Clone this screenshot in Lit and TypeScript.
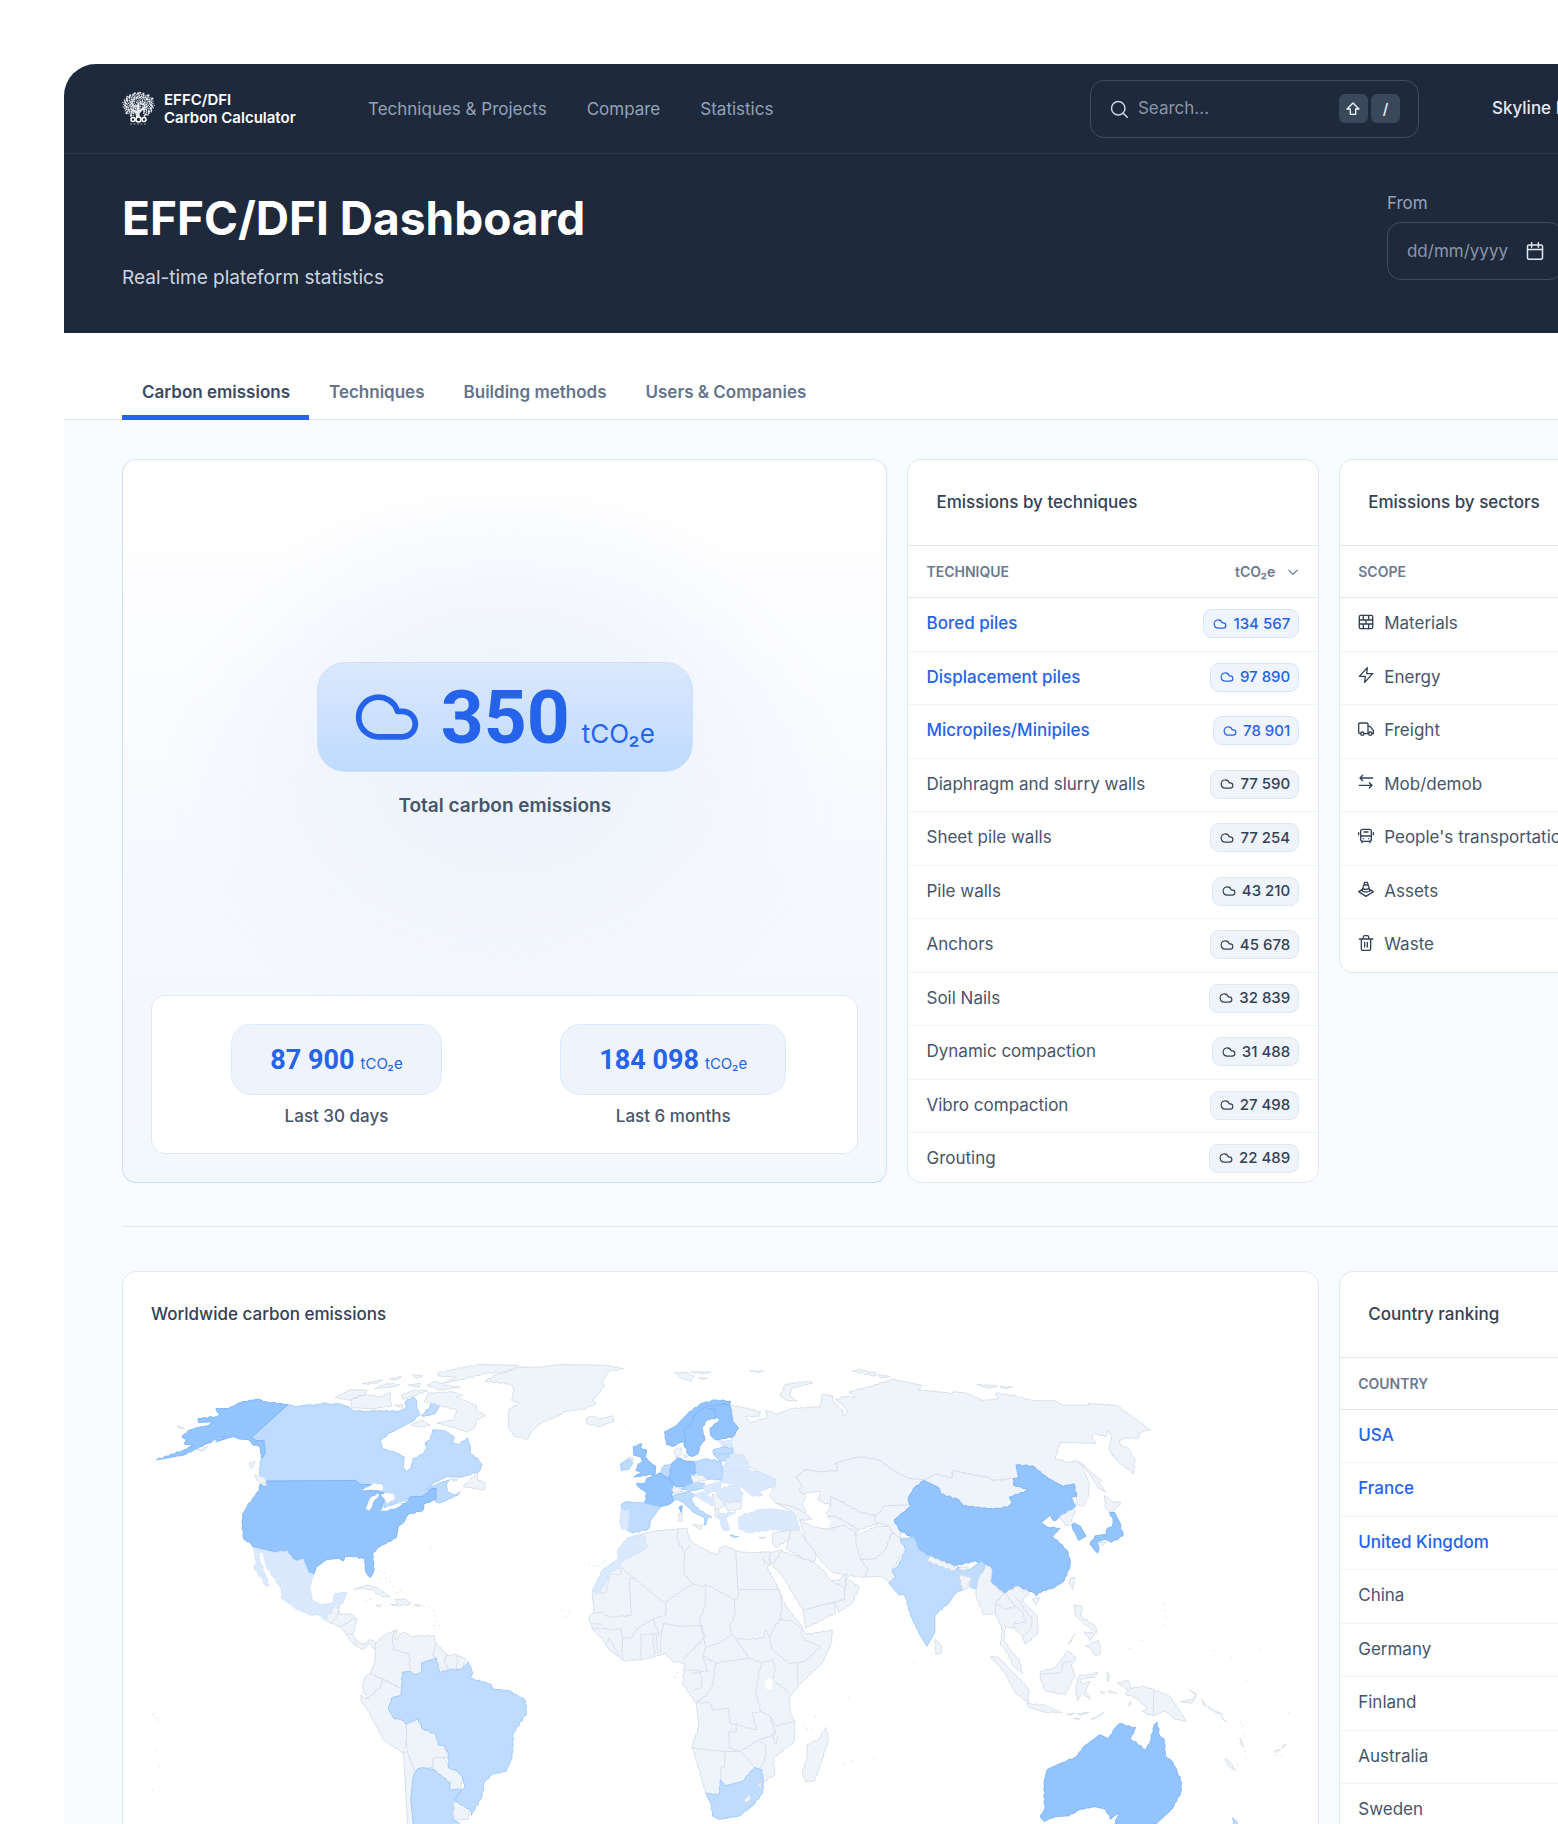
import { LitElement, html, css, svg } from "lit";
import { customElement } from "lit/decorators.js";
import { classMap } from "lit/directives/class-map.js";

type Tone = "land" | "low" | "mid" | "high" | "water";
type Shape = [Tone, string];

/* ---------- map data: outlines as "x,y" lists, grouped by region ---------- */

const americas: Shape[] = [
  ["mid", "444,194 466,200 500,196 540,194 556,188 575,194 600,192 625,200 640,212 680,214 720,212 780,214 800,206 796,186 820,170 832,182 832,206 840,226 815,246 785,262 745,282 722,304 728,328 760,334 795,352 790,380 800,396 815,384 820,356 850,344 862,325 856,310 872,300 880,270 912,272 930,282 944,292 938,310 958,314 984,294 992,320 990,340 1015,356 1028,374 1022,392 990,406 960,412 920,410 880,432 860,450 900,430 930,420 920,436 922,456 948,466 962,456 955,466 900,490 888,486 890,446 878,446 860,470 812,472 795,488 760,494 735,506 732,490 740,460 720,458 690,446 648,422 382,424 358,404 364,350 378,340 374,300 350,302 334,294"],
  ["mid", "845,226 870,205 874,188 900,198 886,222 850,230"],
  ["high", "50,360 128,332 160,316 132,312 140,300 126,292 145,272 178,262 205,258 220,246 176,248 174,236 230,230 240,224 228,206 265,206 300,188 350,178 382,186 444,194 334,294 350,302 372,302 376,340 366,356 360,320 340,316 326,300 300,298 280,290 228,306 256,286 205,310 130,346"],
  ["high", "382,424 648,422 664,434 692,434 664,450 712,454 734,460 700,468 680,506 690,510 704,480 722,464 736,480 722,512 770,506 800,488 812,472 850,470 878,446 890,446 888,480 852,494 850,512 806,524 790,550 776,560 770,594 722,620 698,640 704,690 692,714 678,694 676,658 640,650 615,652 612,664 596,656 560,660 528,684 522,704 506,700 490,658 470,664 458,658 442,632 400,638 340,622 330,608 312,598 306,545 308,526 322,500 345,470 358,452 362,432 376,442"],
  ["water", "664,450 684,444 704,429 730,438 730,452 706,449"],
  ["water", "678,508 690,478 712,462 720,464 700,488 690,512"],
  ["water", "734,460 762,462 766,474 745,492 736,482"],
  ["water", "720,513 745,500 774,502 745,512"],
  ["water", "768,493 798,484 797,490"],
  ["low", "340,624 400,638 442,634 458,658 470,664 490,658 506,700 522,704 510,744 518,780 545,796 578,790 586,762 622,757 610,790 600,796 575,806 576,820 560,842 530,824 510,826 470,808 424,774 424,748 400,712 380,680 370,640 358,636 360,660 375,700 388,738 380,740 362,712 342,682 350,668"],
  ["land", "558,842 562,824 576,820 574,806 592,804 600,798 598,824 634,824 652,838 640,884 650,900 670,914 690,900 708,910 706,930 688,912 672,930 650,918 630,900 618,882 604,862 575,852"],
  ["land", "708,910 735,886 772,870 758,892 762,930 810,944 812,996 788,998 786,1048 735,1020 690,1002 706,970"],
  ["land", "772,870 768,900 790,878 812,890 884,888 890,912 880,944 888,960 846,970 846,996 824,1006 810,990 810,944 762,930 758,892"],
  ["land", "890,912 922,944 914,960 926,992 900,1000 890,956 880,944"],
  ["land", "922,946 954,946 958,990 930,990 914,970"],
  ["land", "954,946 980,960 966,990 952,988"],
  ["land", "690,1002 728,1020 724,1040 686,1078 670,1060 668,1040 676,1012"],
  ["land", "728,1020 786,1048 784,1066 756,1076 746,1110 784,1140 800,1154 802,1200 792,1242 735,1204 710,1160 680,1104 666,1090 664,1066 686,1078 724,1040"],
  ["land", "800,1154 836,1138 846,1166 890,1186 896,1216 914,1218 926,1256 882,1256 880,1284 824,1294 802,1234"],
  ["land", "882,1256 914,1252 928,1286 950,1292 968,1312 966,1346 930,1352 932,1330 880,1290"],
  ["land", "792,1242 802,1234 824,1294 820,1330 814,1380 826,1500 806,1500 800,1380"],
  ["mid", "834,1288 860,1286 880,1290 932,1330 930,1352 966,1350 944,1384 942,1440 960,1452 930,1500 826,1500 814,1380 820,1312"],
  ["land", "944,1386 990,1410 986,1440 960,1442 942,1430"],
  ["mid", "788,998 812,996 824,1006 846,996 846,970 890,956 900,1000 930,990 966,990 986,966 1000,1000 992,1016 1055,1034 1060,1048 1110,1054 1158,1082 1162,1120 1122,1180 1118,1256 1100,1296 1060,1304 1034,1330 1028,1370 996,1428 990,1410 944,1384 976,1340 968,1312 950,1292 928,1286 926,1240 914,1218 896,1216 890,1186 846,1166 836,1138 800,1154 784,1140 764,1138 746,1110 756,1076 786,1066"],
  ["land", "642,750 680,736 712,744 752,772 725,770 695,750 665,746"],
  ["land", "766,778 800,780 814,792 780,800 752,794 775,794"],
  ["land", "708,796 726,796 720,802"],
  ["land", "824,796 842,796 840,801"],
  ["land", "586,174 628,150 680,150 680,160 632,180"],
  ["land", "632,180 680,164 720,170 752,158 750,180 756,198 700,206 636,204"],
  ["land", "666,132 730,120 704,132"],
  ["land", "704,146 740,130 780,134 770,140 720,144"],
  ["land", "750,116 786,110 764,120"],
  ["land", "820,104 850,108 830,116"],
  ["land", "804,136 842,130 840,142"],
  ["land", "785,166 820,152 866,152 820,168 790,178"],
  ["land", "764,196 790,194 786,206"],
  ["land", "855,186 866,160 940,156 970,166 950,172 1010,196 1010,210 1038,228 1010,240 1004,264 980,276 940,262 892,250 942,240 952,210 905,198 870,188"],
  ["land", "895,100 940,88 1020,74 1140,76 1100,96 1040,100 980,116 910,130 950,112 895,108"],
  ["land", "862,136 890,124 918,136 962,142 900,150"],
  ["land", "815,256 845,240 872,256 835,262"],
  ["land", "1140,82 1200,82 1260,74 1400,76 1454,86 1410,94 1390,120 1395,140 1360,180 1370,190 1340,206 1280,214 1258,228 1210,246 1180,270 1164,298 1124,288 1106,262 1108,208 1140,190 1116,182 1124,150 1110,132 1036,124 1070,104 1100,96"],
  ["land", "972,440 1016,398 1014,420 1038,430 1034,450 1000,446"],
  ["land", "934,416 956,420 940,424"],
  ["land", "344,406 372,412 382,438 352,422"],
  ["land", "328,370 346,364 334,386"],
  ["land", "174,330 204,322 190,334"],
  ["land", "112,258 134,264 116,264"],
];

const europeAfrica: Shape[] = [
  ["land", "80,236 100,230 120,238 160,228 164,244 120,260 84,252"],
  ["land", "346,98 385,98 405,108 394,124 370,116"],
  ["land", "395,96 456,96 430,102"],
  ["land", "418,114 446,114 432,119"],
  ["land", "572,93 614,93 594,97"],
  ["land", "664,170 680,132 756,124 760,130 700,144 692,168 714,184 680,180"],
  ["land", "880,94 900,88 952,100 950,108"],
  ["land", "958,104 994,110 964,114"],
  ["land", "516,196 560,204 604,216 600,230 560,230 575,250 600,238 624,234 618,210 640,216 650,224 700,206 784,200 790,164 820,166 826,190 850,210 854,230 866,216 850,190 830,180 850,170 890,172 870,156 904,148 940,138 1000,118 1090,136 1080,150 1180,160 1182,156 1220,158 1274,182 1320,176 1310,160 1360,166 1420,182 1486,182 1516,196 1590,196 1590,190 1660,196 1680,200 1742,246 1776,270 1750,276 1734,298 1720,292 1682,300 1688,318 1710,326 1728,356 1726,402 1680,366 1650,330 1660,290 1650,270 1642,292 1612,280 1600,288 1612,310 1504,308 1490,356 1530,368 1550,362 1570,378 1592,430 1590,470 1572,500 1550,496 1554,470 1546,432 1514,440 1466,414 1420,380 1372,376 1380,414 1364,416 1310,422 1280,412 1180,392 1180,414 1130,404 1096,420 1050,416 1000,390 960,360 900,350 830,370 836,392 776,396 740,390 712,410 730,440 720,450 740,470 730,490 740,520 700,500 650,490 630,466 650,438 650,418 600,396 572,382 556,348 520,342 516,302 522,292 538,266 522,246 514,200"],
  ["high", "316,276 350,258 390,216 430,190 470,180 514,184 512,200 500,192 450,200 410,220 396,250 376,272 380,310 368,306 340,320 322,314"],
  ["high", "380,310 376,272 396,250 410,220 440,202 468,210 470,236 446,240 428,262 438,300 422,320 416,342 400,350 388,346 374,312"],
  ["high", "440,200 500,192 514,200 522,246 538,266 520,292 468,300 454,286 452,266 482,240 470,230 468,208"],
  ["land", "346,330 366,324 368,342 350,354"],
  ["land", "372,344 386,350 376,354"],
  ["high", "222,320 248,312 244,324 262,330 258,350 276,370 290,380 288,402 224,412 246,396 230,392 236,374 250,366 244,350 224,346"],
  ["mid", "184,372 214,352 220,370 210,388 186,392"],
  ["land", "206,354 220,352 222,364"],
  ["mid", "300,400 316,376 338,372 332,390 332,414"],
  ["high", "232,430 258,430 262,416 300,400 344,424 338,466 344,484 330,494 300,502 256,496 262,460 234,438"],
  ["high", "338,370 356,354 384,364 406,366 410,400 392,412 402,436 396,444 350,440 332,420 332,390"],
  ["mid", "186,494 200,486 256,490 304,502 276,540 268,568 220,580 200,570 206,512 188,508"],
  ["low", "186,508 210,512 206,570 186,568 182,540"],
  ["mid", "344,466 392,454 410,466 396,474 406,500 458,534 446,530 440,556 434,556 436,534 400,516 376,490 356,480 342,480"],
  ["land", "400,556 428,556 426,570"],
  ["land", "358,522 370,520 370,544 358,544"],
  ["high", "360,502 369,498 366,518"],
  ["land", "338,448 360,442 372,456 344,460"],
  ["mid", "366,448 402,428 436,430 434,446 400,452"],
  ["mid", "406,366 436,358 486,364 496,404 486,422 440,416 412,400"],
  ["land", "396,406 430,408 444,420 404,430"],
  ["low", "430,440 490,424 480,450 440,462"],
  ["low", "478,304 516,302 518,320 490,320"],
  ["mid", "462,330 490,322 520,324 522,342 462,342"],
  ["mid", "464,344 512,344 500,364 480,362"],
  ["low", "500,360 520,342 556,348 572,382 560,392 494,392"],
  ["low", "494,396 560,390 600,396 650,418 650,438 600,456 612,466 580,470 556,448 530,434 490,428"],
  ["low", "470,452 530,432 552,460 546,484 500,488 480,474"],
  ["low", "404,466 430,456 460,476 462,500 430,480"],
  ["land", "460,462 480,470 496,500 470,510"],
  ["land", "496,490 546,486 544,508 505,514"],
  ["land", "466,506 480,510 480,534 468,530"],
  ["low", "478,524 530,516 500,534 512,570 490,570"],
  ["mid", "512,587 540,590 526,593"],
  ["low", "540,530 600,510 640,508 706,516 722,566 690,572 640,570 570,578 540,568 538,540"],
  ["land", "600,592 622,592 610,598"],
  ["land", "650,490 700,500 740,520 760,540 722,540 700,516"],
  ["land", "712,410 740,390 776,396 836,392 830,370 900,350 960,360 1000,390 1050,416 1096,420 1064,446 1046,476 1056,496 980,498 950,530 900,516 870,498 818,470 816,496 780,484 782,454 730,462 720,450 730,440"],
  ["land", "816,470 870,498 900,516 950,530 960,550 900,570 830,530 800,530 810,510 816,496"],
  ["land", "800,530 830,530 900,570 890,588 850,560 800,568"],
  ["land", "980,498 1056,496 1046,520 1006,540 1026,570 1026,596 1000,580 990,560 950,548 950,530"],
  ["land", "722,540 760,560 810,570 850,556 890,576 892,610 906,660 928,690 918,712 860,708 820,698 780,656 740,600"],
  ["land", "890,590 950,560 990,560 1000,580 980,630 950,658 906,660 892,620"],
  ["land", "906,660 950,658 980,630 1000,580 1026,596 1040,630 1000,690 1010,712 992,728 968,710 918,712 928,690"],
  ["land", "694,574 720,568 740,600 770,640 768,664 740,660 680,626 690,600"],
  ["land", "640,580 694,572 690,600 650,624 640,610"],
  ["land", "632,640 668,630 664,650 634,676"],
  ["land", "640,676 668,634 740,660 766,668 800,700 812,720 858,744 856,780 790,796 732,812 700,760 680,720"],
  ["land", "732,812 790,796 826,790 830,820 740,866"],
  ["land", "858,744 864,716 902,744 880,790 840,818 826,788 856,780"],
  ["land", "812,722 840,722 862,700 858,744"],
  ["water", "740,466 784,458 770,480 792,510 812,540 808,566 776,562 764,540 770,520 744,490"],
  ["land", "224,588 240,584 300,572 384,566 390,600 420,622 474,646 482,624 500,618 530,634 570,640 632,636 630,680 610,656 660,750 680,800 730,860 740,884 820,872 818,910 790,970 722,1034 690,1076 694,1120 708,1146 706,1206 642,1258 648,1306 614,1326 610,1362 580,1400 540,1430 480,1440 460,1430 458,1400 440,1362 420,1290 398,1220 420,1160 410,1090 370,1030 376,970 340,966 320,942 250,960 196,964 150,930 130,900 98,866 90,836 104,812 98,758 130,690 180,656 176,630 205,594"],
  ["low", "205,594 256,588 264,624 230,644 188,664 182,686 152,696 140,728 122,756 98,756 130,690 174,660 176,632"],
  ["mid", "440,1362 480,1366 484,1320 496,1340 550,1326 586,1284 608,1290 614,1326 610,1362 580,1400 540,1430 480,1440 460,1430 458,1400"],
  ["land", "554,1382 570,1366 576,1378 562,1390"],
  ["land", "596,1334 606,1330 606,1346"],
  ["water", "620,1022 640,1018 638,1048 618,1046"],
  ["land", "800,1164 810,1200 790,1260 768,1324 740,1328 730,1300 744,1256 744,1216 780,1200"],
  ["land", "1130,898 1150,920 1148,940 1130,944"],
];

const asiaPacific: Shape[] = [
  ["land", "76,422 110,404 160,414 160,392 260,412 290,422 344,416 344,436 392,450 332,472 340,488 326,502 284,508 194,498 180,480 124,462 120,444"],
  ["high", "76,422 120,444 124,462 180,480 194,498 284,508 326,502 340,488 332,472 392,450 344,436 344,416 360,414 352,376 402,378 446,414 494,440 526,432 534,470 518,472 530,500 466,544 456,526 428,548 446,562 484,566 462,590 504,630 514,656 514,680 496,724 470,742 418,760 414,770 400,756 356,740 320,760 300,750 276,726 280,684 262,676 230,664 170,678 92,650 58,626 50,600 0,570 -14,540 10,520 36,500 28,476 44,446"],
  ["mid", "4,598 46,592 60,628 92,650 86,666 170,694 178,680 182,692 212,690 248,664 262,676 256,690 240,716 232,748 212,740 216,712 182,706 190,752 170,762 150,790 108,826 108,880 84,920 66,890 36,830 18,764 0,766 -30,730 -10,712 -20,690 0,676 20,630"],
  ["land", "92,650 170,680 168,694 86,666"],
  ["land", "182,706 216,712 212,740 190,752"],
  ["land", "182,682 208,682 206,690 184,690"],
  ["land", "262,676 280,690 276,726 300,750 316,762 290,790 292,820 256,826 232,770 232,748 240,716 256,690"],
  ["land", "316,762 356,740 390,758 372,784 416,830 418,880 380,914 372,890 346,866 320,860 316,900 340,940 362,960 372,1002 345,980 320,930 306,918 310,870 290,820 290,790"],
  ["land", "276,952 300,954 340,996 390,1048 388,1090 350,1060 316,996"],
  ["land", "384,1092 440,1098 490,1120 440,1118 390,1104"],
  ["land", "426,996 470,984 508,934 532,954 518,980 530,1006 500,1066 440,1054 426,1020"],
  ["land", "536,1084 532,1050 540,1010 598,1000 590,1012 545,1020 550,1034 576,1026 560,1050 574,1080 552,1060"],
  ["land", "528,796 550,798 548,830 590,860 594,880 560,856 530,826"],
  ["land", "560,920 600,902 608,940 590,948 580,930"],
  ["land", "556,876 590,882 575,904"],
  ["land", "508,914 530,882 518,906"],
  ["land", "656,1030 690,1024 696,1048 730,1040 766,1050 812,1070 834,1100 864,1144 830,1140 800,1114 764,1130 730,1116 746,1106 714,1076 680,1064 690,1050"],
  ["land", "846,1086 880,1080 892,1066 874,1050 896,1066 880,1092"],
  ["land", "624,996 634,1010 628,1026"],
  ["land", "505,1124 528,1120 518,1128"],
  ["land", "536,1122 570,1120 545,1128"],
  ["land", "526,1136 544,1138 534,1142"],
  ["land", "576,1142 616,1120 590,1136"],
  ["land", "606,1056 620,1060 610,1063"],
  ["land", "628,1054 656,1060 632,1060"],
  ["land", "690,1100 696,1086 697,1096"],
  ["land", "516,716 528,712 524,750 514,736"],
  ["land", "402,778 424,774 412,796"],
  ["land", "484,530 526,506 530,520 518,540 524,556 500,558"],
  ["high", "520,556 528,550 546,560 562,590 540,602 530,580"],
  ["high", "634,518 648,518 662,545 674,588 640,608 624,600 596,604 602,626 598,640 588,632 574,614 590,588 624,584 626,566 642,560 644,544"],
  ["land", "618,468 640,484 668,490 640,516 622,506"],
  ["land", "600,608 624,606 610,618"],
  ["land", "540,362 570,390 610,424 600,428 624,458 600,446 572,400"],
  ["land", "234,134 296,138 270,146"],
  ["land", "304,140 342,142 324,146"],
  ["high", "664,1152 682,1160 712,1164 696,1198 742,1232 758,1200 764,1166 776,1148 784,1190 798,1200 800,1248 824,1270 836,1296 850,1330 846,1362 820,1410 775,1452 760,1500 650,1500 650,1452 660,1420 636,1440 622,1410 590,1402 545,1410 510,1430 470,1432 436,1446 424,1430 438,1410 436,1330 446,1290 490,1270 530,1254 560,1218 604,1186 630,1198 650,1166"],
  ["mid", "1002,1436 1018,1450 1010,1480"],
  ["land", "910,1080 926,1102 916,1096"],
  ["land", "930,1100 948,1114 934,1110"],
  ["land", "948,1116 972,1124 956,1122"],
  ["land", "968,1130 986,1148 972,1138"],
  ["land", "980,1258 996,1270 1012,1292 992,1280"],
  ["land", "1024,1196 1038,1224 1028,1216"],
  ["land", "1130,1234 1146,1230 1134,1240"],
  ["land", "1148,1222 1164,1214 1154,1226"],
];

const borders: Record<string, string[]> = {
  americas: [
    "600,798 592,828 575,852", "604,862 640,838 652,838", "620,882 640,884", "648,898 650,918",
  ],
  europeAfrica: [
    "188,686 310,786 320,786 400,732 374,700 376,640 354,600 356,570", "376,640 390,616",
    "400,732 430,742 440,734 526,780 538,774 530,634", "540,750 662,750",
    "104,760 140,760 152,704 184,704 184,686", "150,832 216,828 210,716 226,716",
    "320,786 320,826 280,838 230,870 216,896 190,896", "440,734 438,800 422,840 430,870",
    "304,940 306,880 314,852 360,860 424,858 440,890 400,930 370,960", "246,886 244,960",
    "280,884 286,946", "290,882 296,944", "186,870 190,900 188,962", "244,886 300,882 280,838",
    "100,852 128,854", "98,866 186,870", "136,916 150,896 164,920 180,950", "150,832 130,818 104,822",
    "526,780 528,826 512,860 520,884 480,910 440,924 424,858", "662,750 668,800 664,840 640,870 632,896 620,870 612,896 560,900 530,896 520,884",
    "530,896 570,956 610,970 640,960", "664,840 700,844 730,870 726,884",
    "632,896 640,930 690,972 740,966 784,920 736,900 726,884", "716,970 716,1036",
    "640,960 650,990 640,1020 690,1060", "430,950 470,970 570,956",
    "470,970 460,1040 440,1070 410,1090 450,1090 460,1112 508,1106 512,1150 580,1170 592,1170 580,1120 606,1116 590,1060 600,1000 610,970",
    "440,924 430,950 446,996 376,990", "400,1056 430,1040 424,996 396,1004",
    "606,1116 632,1130 650,1158 706,1146", "532,1150 532,1176 510,1176 510,1226 545,1236 600,1200 650,1186 632,1130",
    "398,1226 490,1236 545,1236", "498,1236 496,1282 486,1284 484,1320", "545,1236 586,1284",
    "600,1206 622,1220 618,1262 604,1286", "650,1170 640,1190 650,1216 656,1190",
  ],
  asiaPacific: [
    "320,762 350,800 376,822 380,850 346,850 346,866", "350,770 400,840 396,870 372,890",
    "290,790 320,810 350,800", "430,1004 486,1000 496,968 518,966", "766,1050 764,1130",
  ],
};

const islets = [
  [38, 1126], [48, 1136], [56, 1145], [46, 1234], [58, 1282], [38, 1352], [874, 626],
  [722, 694], [734, 700], [720, 716], [738, 714], [752, 726], [760, 740], [772, 760], [782, 752],
  [852, 798], [870, 804], [882, 812], [886, 828], [888, 846], [884, 858], [900, 858], [680, 784], [692, 780],
  [1268, 812], [1276, 832], [1290, 818], [1286, 834], [1350, 674], [1362, 680], [1376, 678], [1390, 672], [1396, 664],
  [1477, 276], [1606, 1014], [1614, 998], [1998, 1160], [2004, 1168], [2016, 1170], [2030, 1132], [2118, 1274], [2141, 1264], [2204, 1258], [2128, 1074], [2324, 968],
  [3074, 792], [3080, 812], [3082, 834], [3077, 856], [2975, 927], [3010, 902], [3228, 934], [3280, 953], [3366, 931], [3325, 1024], [3451, 1121],
  [3244, 1160], [3306, 1150], [3312, 1160], [3314, 1184], [3320, 1190], [3310, 1210], [3320, 1236], [3322, 1256], [3296, 1274], [3300, 1280], [3412, 1248], [3430, 1248],
];

const parse = (list: string) => list.split(" ").map((p) => p.split(",").map(Number) as [number, number]);

/* Adds small kinks to an edge. The result is the same from either end, so neighbours share one border. */
const coast = (a: [number, number], b: [number, number]): [number, number][] => {
  const flip = a[0] > b[0] || (a[0] === b[0] && a[1] > b[1]);
  const [p, q] = flip ? [b, a] : [a, b];
  const length = Math.hypot(q[0] - p[0], q[1] - p[1]);
  const steps = length > 110 ? 1 : Math.floor(length / 9);
  const out: [number, number][] = [];
  for (let i = 1; i < steps; i++) {
    const wave = Math.sin(p[0] * 12.9 + p[1] * 7.3 + q[0] * 3.7 + i * 47.1) * 2;
    out.push([
      Math.round(p[0] + ((q[0] - p[0]) * i) / steps - ((q[1] - p[1]) / length) * wave),
      Math.round(p[1] + ((q[1] - p[1]) * i) / steps + ((q[0] - p[0]) / length) * wave),
    ]);
  }
  return flip ? out.reverse() : out;
};

const outline = (list: string, closed = true) => {
  const pts = parse(list);
  const all: [number, number][] = [];
  pts.forEach((p, i) => {
    all.push(p);
    if (i < pts.length - 1) all.push(...coast(p, pts[i + 1]));
    else if (closed) all.push(...coast(p, pts[0]));
  });
  return "M" + all.map((p) => p.join(" ")).join("L") + (closed ? "Z" : "");
};

/* ---------- icons ---------- */

const glyphs = {
  cloud: svg`<path d="M17.500 19H9a7 7 0 1 1 6.710-9h1.790a4.500 4.500 0 1 1 0 9Z" />`,
  search: svg`<circle cx="11" cy="11" r="9" /><path d="m23 23-5.500-5.500" />`,
  shift: svg`<path d="M12 3 3 12h5v8h8v-8h5Z" />`,
  calendar: svg`<rect x="2" y="4" width="20" height="19" rx="2" /><path d="M2 10h20M7.500 1v6M16.500 1v6" />`,
  chevron: svg`<path d="m5 9 7 7 7-7" />`,
  bricks: svg`<rect x="2" y="2" width="20" height="20" rx="2" /><path d="M2 9h20M2 15h20M8 2v7M16 2v7M12 9v6M8 15v7M16 15v7" />`,
  bolt: svg`<path d="M14 1 2 14h9l-1 9 12-13h-9Z" />`,
  truck: svg`<path d="M4 19H3a2 2 0 0 1-2-2V5a2 2 0 0 1 2-2h10a2 2 0 0 1 2 2v14H9M15 8h3l5 6v5h-2M15 19h1" /><circle cx="6.500" cy="19" r="2.500" /><circle cx="18.500" cy="19" r="2.500" />`,
  swap: svg`<path d="M22 6H3M7 2 3 6l4 4M2 17h19M17 13l4 4-4 4" />`,
  bus: svg`<rect x="4" y="2" width="16" height="18" rx="3" /><path d="M4 12h16M9 6h6M1 7v3M23 7v3M6 20v2M18 20v2M8 16h0M16 16h0" />`,
  cone: svg`<path d="M10 2h4l4 13c-3 2-9 2-12 0ZM9 6h6M7 11c3 2 7 2 10 0M6 13l-5 3 11 7 11-7-5-3" />`,
  trash: svg`<path d="M2 6h20M5 6v15a2 2 0 0 0 2 2h10a2 2 0 0 0 2-2V6M8 6V3a2 2 0 0 1 2-2h4a2 2 0 0 1 2 2v3M10 11v7M14 11v7" />`,
};
type Glyph = keyof typeof glyphs;

const icon = (name: Glyph, size = "s") =>
  html`<svg class="icon icon-${size}" viewBox="0 0 24 24" aria-hidden="true">${glyphs[name]}</svg>`;

const leaves = Array.from({ length: 150 }, (_, i) => {
  const r = Math.sqrt((i + 1) / 150);
  const t = i * 2.4;
  return { x: 33 + Math.cos(t) * r * 32, y: 26 + Math.sin(t) * r * 25, r: 1.3 + ((i * 7) % 4) * 0.35 };
}).filter((l) => !(l.y > 38 && Math.abs(l.x - 33) < 10) && l.y < 48);

/* ---------- table data ---------- */

const techniques: [string, string][] = [
  ["Bored piles", "134 567"], ["Displacement piles", "97 890"], ["Micropiles/Minipiles", "78 901"],
  ["Diaphragm and slurry walls", "77 590"], ["Sheet pile walls", "77 254"], ["Pile walls", "43 210"],
  ["Anchors", "45 678"], ["Soil Nails", "32 839"], ["Dynamic compaction", "31 488"],
  ["Vibro compaction", "27 498"], ["Grouting", "22 489"],
];
const sectors: [Glyph, string][] = [
  ["bricks", "Materials"], ["bolt", "Energy"], ["truck", "Freight"], ["swap", "Mob/demob"],
  ["bus", "People's transportation"], ["cone", "Assets"], ["trash", "Waste"],
];
const countries = ["USA", "France", "United Kingdom", "China", "Germany", "Finland", "Australia", "Sweden"];
const tabs = ["Carbon emissions", "Techniques", "Building methods", "Users & Companies"];

@customElement("emissions-map")
export class EmissionsMap extends LitElement {
  static styles = css`
    :host { display: block; }
    svg { display: block; width: 100%; height: auto; }
    path { stroke-width: 3; stroke-linejoin: round; }
    .land { fill: #eff4fb; stroke: #d8dfe9; }
    .low { fill: #dbe9fe; stroke: #d3e4fd; }
    .mid { fill: #bfdcff; stroke: #a2ccfd; }
    .high { fill: #94c4fe; stroke: #80b5fc; }
    .water { fill: #fff; stroke: none; }
    .border { fill: none; stroke: #d8dfe9; }
    .islet { fill: #d5dce7; }
  `;

  private region(shapes: Shape[], lines: string[], shift: number) {
    return svg`<g transform="translate(${shift} 0)">
      ${shapes.map(([tone, list]) => svg`<path class=${tone} d=${outline(list)} />`)}
      ${lines.map((list) => svg`<path class="border" d=${outline(list, false)} />`)}
    </g>`;
  }

  render() {
    return html`<svg viewBox="-51 0 3591 1500" role="img" aria-label="Worldwide carbon emissions">
      ${this.region(americas, borders.americas, 0)}
      ${this.region(europeAfrica, borders.europeAfrica, 1260)}
      ${this.region(asiaPacific, borders.asiaPacific, 2280)}
      ${islets.map(([x, y]) => svg`<circle class="islet" cx=${x} cy=${y} r="2" />`)}
    </svg>`;
  }
}

@customElement("app-root")
export class AppRoot extends LitElement {
  static styles = css`
    :host {
      display: block;
      height: 100vh;
      overflow: hidden;
      background: #fff;
      color: #475569;
      font: 400 17px/1.5 Inter, "Liberation Sans", sans-serif;
    }
    * { box-sizing: border-box; }
    h1, h2, p { margin: 0; }
    a { color: inherit; text-decoration: none; }
    button, input { font: inherit; color: inherit; background: none; border: 0; padding: 0; margin: 0; }
    input { outline: none; min-width: 0; }
    input::placeholder { color: #8996a9; opacity: 1; }
    .icon { flex: none; fill: none; stroke: currentColor; stroke-width: 2; stroke-linecap: round; stroke-linejoin: round; }
    .icon-xs { width: 14px; height: 14px; }
    .icon-s { width: 16px; height: 16px; }
    .icon-m { width: 18px; height: 18px; }
    .icon-xl { width: 68px; height: 68px; }

    .frame { width: 112vw; margin: 64px 0 0 64px; background: #f8fbff; border-top-left-radius: 32px; overflow: hidden; }
    .dark { background: #1e293b; color: #cbd5e1; }
    .bar { display: flex; align-items: center; height: 90px; padding: 0 58px; border-bottom: 1px solid #2a3749; }
    .brand { display: flex; align-items: center; gap: 9px; width: 246px; color: #fff; font-size: 15px; line-height: 18px; font-weight: 600; }
    .brand svg { width: 33px; height: 33px; flex: none; fill: #e8edf3; stroke: none; }
    .brand .ring { fill: none; stroke: #fff; stroke-width: 3; }
    .nav { display: flex; gap: 40px; padding-top: 3px; color: #94a3b8; }
    .search { display: flex; align-items: center; width: 329px; height: 58px; margin-left: auto; padding: 0 18px 0 19px; gap: 10px; border: 1px solid #3e4d62; border-radius: 14px; }
    .search input { flex: 1; }
    .keys { display: flex; gap: 3px; }
    kbd { display: grid; place-items: center; width: 29px; height: 29px; border-radius: 6px; background: #3a485c; color: #f1f5f9; font: 500 15px/20px Inter, sans-serif; }
    .account { width: 259px; margin-left: 73px; text-align: left; font-weight: 500; color: #e2e8f0; }
    .intro { display: flex; justify-content: space-between; padding: 36px 58px 0; height: 179px; }
    h1 { color: #fff; font-size: 46px; line-height: 56px; font-weight: 700; }
    .lead { margin-top: 18px; font-size: 19px; line-height: 28px; }
    .dates { display: flex; gap: 12px; }
    .date { display: flex; flex-direction: column; gap: 6px; width: 176px; color: #94a3b8; line-height: 26px; }
    .field { display: flex; align-items: center; height: 58px; padding: 0 18px 0 19px; gap: 16px; border: 1px solid #3e4d62; border-radius: 14px; }
    .field input { width: 0; flex: 1; }
    .field button { display: flex; color: #e2e8f0; }

    .tabs { display: flex; height: 87px; padding: 0 58px; background: #fff; border-bottom: 1px solid #e2e8f0; align-items: flex-end; }
    .tab { height: 56px; margin-bottom: -1px; padding: 3px 19px 0 20px; font-weight: 600; font-size: 17px; line-height: 50px; color: #64748b; border-bottom: 5px solid transparent; }
    .tab.active { color: #3b4a60; border-color: #2563eb; }

    .row { display: grid; grid-template-columns: 766fr 412fr 412fr; gap: 20px; margin: 0 58px; align-items: start; }
    .first { padding: 39px 0 43px; border-bottom: 1px solid #e2e8f0; }
    .second { padding-top: 44px; }
    .wide { grid-column: span 2; }
    .card { border: 1px solid #e2e8f0; border-radius: 14px; background: #fff; overflow: hidden; }
    h2 { padding: 0 28px; font-size: 17px; font-weight: 500; line-height: 85px; color: #334155; }

    .hero { align-self: stretch; display: flex; flex-direction: column; padding: 28px; border-color: #dbe7f7 #cfe1fb #bfdbfe; background: radial-gradient(ellipse 340px 280px at 50% 42%, #edf3fb, #f1f5fc 50%, transparent), linear-gradient(#fff, #fcfdff 25%, #f5f8fe 60%, #f3f7fe); }
    .total { flex: 1; display: flex; flex-direction: column; align-items: center; justify-content: center; gap: 20px; }
    .figure { display: flex; align-items: baseline; color: #2563eb; font-family: Roboto, Inter, sans-serif; font-weight: 700; border: 1px solid #cfe2fd; }
    .big { align-items: center; height: 110px; padding: 0 37px 0 35px; gap: 20px; border-radius: 28px; background: linear-gradient(#dbe8fd, #bfdbfe); }
    .reading { display: flex; align-items: baseline; gap: 12px; font-size: 75px; line-height: 100px; }
    .unit { font: 400 15px/20px Inter, sans-serif; }
    .big .unit { font-size: 26px; }
    .total p { font-size: 19px; line-height: 28px; font-weight: 600; color: #475569; }
    .recent { display: flex; justify-content: space-around; padding: 28px 12px 14px 20px; border: 1px solid #e2e8f0; border-radius: 14px; background: #fff; text-align: center; font-weight: 500; }
    .small { height: 71px; padding: 0 38px; gap: 6px; margin-bottom: 7px; border-radius: 20px; background: #eff4fc; border-color: #dbeafe; font-size: 27px; line-height: 70px; }
    .recent p { line-height: 28px; margin-bottom: 9px; color: #475569; }

    table { width: 100%; border-collapse: separate; border-spacing: 0; }
    th { height: 53px; padding: 0 18px; border: 1px solid #e2e8f0; border-width: 1px 0; font-size: 14px; font-weight: 600; text-align: left; text-transform: uppercase; color: #6b7a90; }
    th.value { text-align: right; text-transform: none; }
    th button { display: inline-flex; align-items: center; gap: 11px; font-weight: 600; }
    td { padding: 13px 18px 14px; border-bottom: 1px solid #eff4fa; line-height: 1.5; }
    td.value { padding: 0 19px 1px; text-align: right; vertical-align: middle; }
    tr:last-child td { border-bottom: 0; }
    .fit tr:last-child td { padding-bottom: 10px; }
    .fit tr:last-child td.value { padding: 2px 19px 0; }
    .top { color: #2563eb; font-weight: 500; }
    .badge { display: inline-flex; align-items: center; gap: 6px; height: 29px; padding: 0 8px 0 9px; border: 1px solid #dfe7f1; border-radius: 9px; background: #eff4fb; color: #334155; font-size: 15px; line-height: 20px; font-weight: 500; vertical-align: middle; }
    .top .badge { border-color: #d6e5fc; background: #eff4fd; color: #2563eb; }
    .sector { display: flex; align-items: center; gap: 10px; white-space: nowrap; }
    .sector .icon { margin-bottom: 4px; color: #334155; }
    .map-title { height: 68px; }
  `;

  private unit = () => html`<span class="unit">tCO₂e</span>`;

  private dateField(id: string, label: string) {
    return html`<div class="date">
      <label for=${id}>${label}</label>
      <div class="field">
        <input id=${id} placeholder="dd/mm/yyyy" />
        <button aria-label="Pick a date">${icon("calendar", "m")}</button>
      </div>
    </div>`;
  }

  render() {
    return html`<div class="frame">
      <header class="dark">
        <div class="bar">
          <a class="brand" href="#">
            <svg viewBox="0 0 66 66" aria-hidden="true">
              ${leaves.map((l) => svg`<circle cx=${l.x} cy=${l.y} r=${l.r} />`)}
              <path d="M31 22h3l1 14 9-7 2 2-11 12 1 7h-8l-1-7-11-9 2-2 11 6Z" />
              <g class="ring"><circle cx="22" cy="55" r="4" /><circle cx="33" cy="55" r="5" /><circle cx="44" cy="55" r="4" /></g>
              <path d="M16 63h4v2h-4zM23 63h4v2h-4zM30 63h4v2h-4zM37 63h4v2h-4zM44 63h4v2h-4z" opacity=".6" />
            </svg>
            <span>EFFC/DFI<br />Carbon Calculator</span>
          </a>
          <nav class="nav">
            <a href="#">Techniques &amp; Projects</a><a href="#">Compare</a><a href="#">Statistics</a>
          </nav>
          <div class="search">
            ${icon("search", "m")}
            <input type="search" placeholder="Search..." aria-label="Search" />
            <span class="keys"><kbd>${icon("shift", "s")}</kbd><kbd>/</kbd></span>
          </div>
          <button class="account">Skyline Engineering</button>
        </div>
        <div class="intro">
          <div>
            <h1>EFFC/DFI Dashboard</h1>
            <p class="lead">Real-time plateform statistics</p>
          </div>
          <div class="dates">${this.dateField("from", "From")}${this.dateField("to", "To")}</div>
        </div>
      </header>

      <nav class="tabs">
        ${tabs.map((name, i) => html`<button class=${classMap({ tab: true, active: i === 0 })}>${name}</button>`)}
      </nav>

      <section class="row first">
        <article class="card hero">
          <div class="total">
            <div class="figure big">
              ${icon("cloud", "xl")}
              <span class="reading">350${this.unit()}</span>
            </div>
            <p>Total carbon emissions</p>
          </div>
          <div class="recent">
            <div><div class="figure small">87 900${this.unit()}</div><p>Last 30 days</p></div>
            <div><div class="figure small">184 098${this.unit()}</div><p>Last 6 months</p></div>
          </div>
        </article>

        <article class="card">
          <h2>Emissions by techniques</h2>
          <table class="fit">
            <thead>
              <tr><th>Technique</th><th class="value"><button>tCO₂e ${icon("chevron", "xs")}</button></th></tr>
            </thead>
            <tbody>
              ${techniques.map(([name, value], i) => html`<tr class=${classMap({ top: i < 3 })}>
                <td>${i < 3 ? html`<a href="#">${name}</a>` : name}</td>
                <td class="value"><span class="badge">${icon("cloud", "xs")}${value}</span></td>
              </tr>`)}
            </tbody>
          </table>
        </article>

        <article class="card">
          <h2>Emissions by sectors</h2>
          <table>
            <thead><tr><th>Scope</th></tr></thead>
            <tbody>
              ${sectors.map(([glyph, name]) => html`<tr><td><span class="sector">${icon(glyph)}${name}</span></td></tr>`)}
            </tbody>
          </table>
        </article>
      </section>

      <section class="row second">
        <article class="card wide">
          <h2 class="map-title">Worldwide carbon emissions</h2>
          <emissions-map></emissions-map>
        </article>
        <article class="card">
          <h2>Country ranking</h2>
          <table>
            <thead><tr><th>Country</th></tr></thead>
            <tbody>
              ${countries.map((name, i) => html`<tr class=${classMap({ top: i < 3 })}>
                <td>${i < 3 ? html`<a href="#">${name}</a>` : name}</td>
              </tr>`)}
            </tbody>
          </table>
        </article>
      </section>
    </div>`;
  }
}
